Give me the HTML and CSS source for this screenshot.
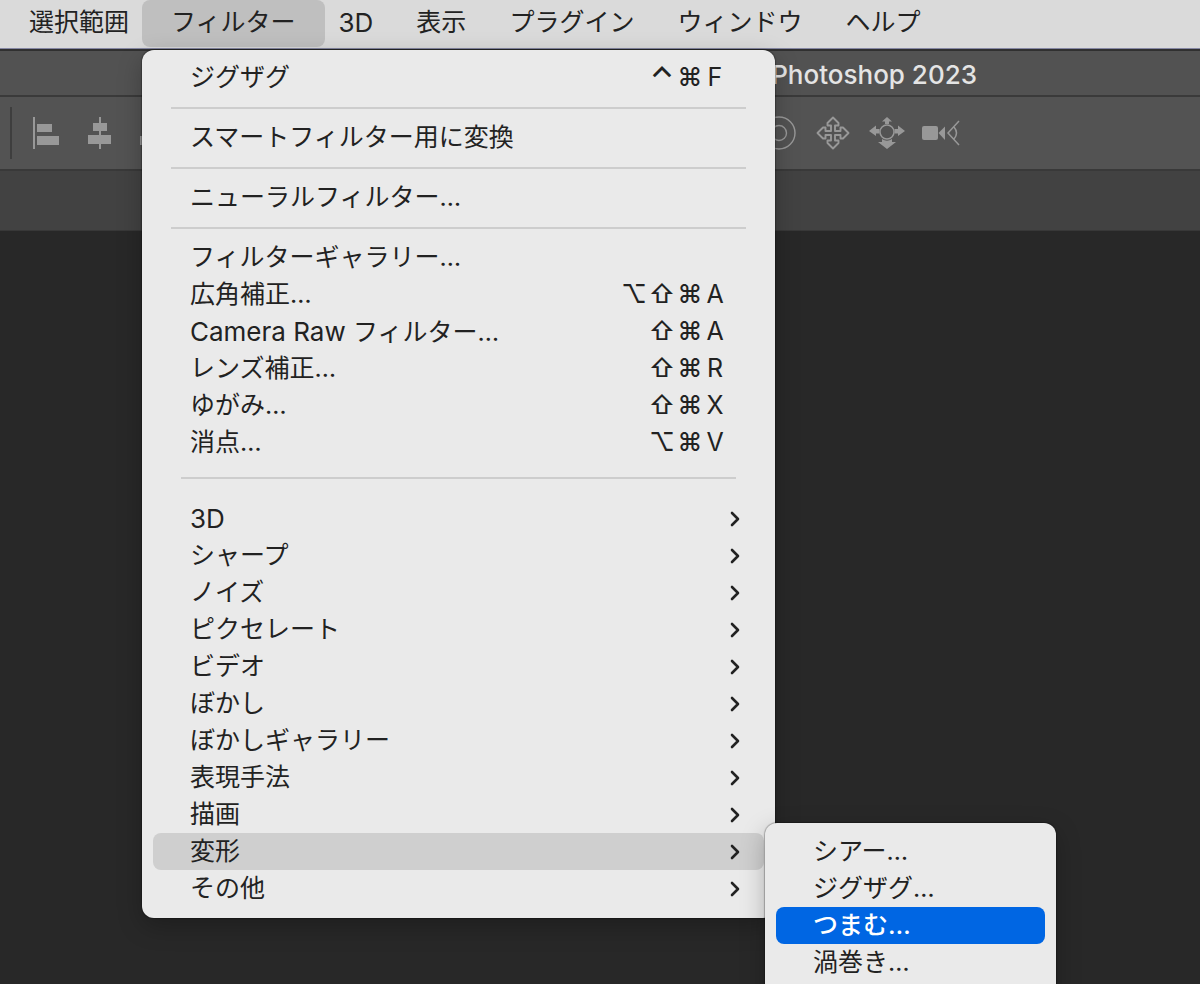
FILE: index.html
```html
<!DOCTYPE html>
<html lang="ja">
<head>
<meta charset="utf-8">
<title>Photoshop 2023</title>
<link rel="stylesheet" href="styles.css">
<script src="menu.js" defer></script>
</head>
<body>
<nav class="menubar" aria-label="メニューバー">
  <button class="menubar-item">選択範囲</button>
  <button class="menubar-item is-open" aria-expanded="true">フィルター</button>
  <button class="menubar-item latin">3D</button>
  <button class="menubar-item">表示</button>
  <button class="menubar-item">プラグイン</button>
  <button class="menubar-item">ウィンドウ</button>
  <button class="menubar-item">ヘルプ</button>
</nav>

<main class="app">
  <header class="titlebar">Photoshop 2023</header>
  <div class="options">
    <div class="tools tools-align">
      <button class="tool" aria-label="左端揃え"><svg width="32" height="32" viewBox="0 0 32 32" fill="currentColor"><path d="M4 0h2v32H4zM8 7h15v8H8zM8 19h22v9H8z"/></svg></button>
      <button class="tool" aria-label="水平方向中央揃え"><svg width="32" height="32" viewBox="0 0 32 32" fill="currentColor"><path d="M16 0h2v32h-2zM10 6h14v8H10zM5 18h23v9H5z"/></svg></button>
      <button class="tool" aria-label="右端揃え"><svg width="32" height="32" viewBox="0 0 32 32" fill="currentColor"><path d="M27 0h2v32h-2zM10 7h15v8H10zM3 19h22v9H3z"/></svg></button>
    </div>
    <div class="tools tools-3d">
      <button class="tool" aria-label="3D 回転"><svg width="38" height="38" viewBox="0 0 38 38" fill="none" stroke="currentColor" stroke-width="1.4"><circle cx="19" cy="19" r="16"/><circle cx="19" cy="19" r="7.5"/></svg></button>
      <button class="tool" aria-label="3D パン"><svg width="38" height="38" viewBox="0 0 38 38" fill="none" stroke="currentColor" stroke-width="1.9" stroke-linejoin="round"><path d="M19 3.500L24.500 9v2.500H21V17h5.500v-3.500H29l5.500 5.500-5.500 5.500h-2.500V21H21v5.500h3.500V29L19 34.500 13.500 29v-2.500H17V21h-5.500v3.500H9L3.500 19 9 13.500h2.500V17H17v-5.500h-3.500V9z"/></svg></button>
      <button class="tool" aria-label="3D スライド"><svg width="38" height="38" viewBox="0 0 38 38" fill="currentColor"><circle cx="19" cy="18" r="7" fill="none" stroke="currentColor" stroke-width="1.5"/><path d="M19 3l5 4.500h-3V10h-4V7.500h-3zM1 17l7-5.500v3.500h3.500v4.500H8V22zM37 17l-7-5.500v3.500h-3.500v4.500H30V22zM14 25q5 3.500 10 0v3h4l-9 7-9-7h4z"/></svg></button>
      <button class="tool" aria-label="3D カメラ"><svg width="38" height="38" viewBox="0 0 38 38" fill="currentColor"><rect y="12" width="16" height="14" rx="2"/><path d="M16.500 19L23 12.500v13.500z"/><path d="M37 7L26 19l11 12M32 13q5 6 0 12" fill="none" stroke="currentColor" stroke-width="1.500"/></svg></button>
    </div>
  </div>
  <div class="tabs"></div>
  <div class="canvas"></div>
</main>

<div class="menu menu-filter" role="menu" aria-label="フィルター">
  <button class="menu-item" role="menuitem">ジグザグ<span class="keys"><span class="key-control">⌃</span><span>⌘</span><span class="key-letter">F</span></span></button>
  <hr class="separator">
  <button class="menu-item" role="menuitem">スマートフィルター用に変換</button>
  <hr class="separator">
  <button class="menu-item" role="menuitem">ニューラルフィルター…</button>
  <hr class="separator">
  <button class="menu-item" role="menuitem">フィルターギャラリー…</button>
  <button class="menu-item" role="menuitem">広角補正…<span class="keys"><span>⌥</span><span>⇧</span><span>⌘</span><span class="key-letter">A</span></span></button>
  <button class="menu-item" role="menuitem"><span><span class="latin">Camera Raw </span>フィルター…</span><span class="keys"><span>⇧</span><span>⌘</span><span class="key-letter">A</span></span></button>
  <button class="menu-item" role="menuitem">レンズ補正…<span class="keys"><span>⇧</span><span>⌘</span><span class="key-letter">R</span></span></button>
  <button class="menu-item" role="menuitem">ゆがみ…<span class="keys"><span>⇧</span><span>⌘</span><span class="key-letter">X</span></span></button>
  <button class="menu-item" role="menuitem">消点…<span class="keys"><span>⌥</span><span>⌘</span><span class="key-letter">V</span></span></button>
  <hr class="separator separator-wide">
  <button class="menu-item has-submenu latin" role="menuitem">3D</button>
  <button class="menu-item has-submenu" role="menuitem">シャープ</button>
  <button class="menu-item has-submenu" role="menuitem">ノイズ</button>
  <button class="menu-item has-submenu" role="menuitem">ピクセレート</button>
  <button class="menu-item has-submenu" role="menuitem">ビデオ</button>
  <button class="menu-item has-submenu" role="menuitem">ぼかし</button>
  <button class="menu-item has-submenu" role="menuitem">ぼかしギャラリー</button>
  <button class="menu-item has-submenu" role="menuitem">表現手法</button>
  <button class="menu-item has-submenu" role="menuitem">描画</button>
  <button class="menu-item has-submenu is-expanded" role="menuitem" aria-expanded="true">変形</button>
  <button class="menu-item has-submenu" role="menuitem">その他</button>
</div>

<div class="menu menu-distort" role="menu" aria-label="変形">
  <button class="menu-item" role="menuitem">シアー…</button>
  <button class="menu-item" role="menuitem">ジグザグ…</button>
  <button class="menu-item is-selected" role="menuitem">つまむ…</button>
  <button class="menu-item" role="menuitem">渦巻き…</button>
</div>
</body>
</html>
```
FILE: menu.js
```js
const chevron = '<svg class="chevron" width="12" height="16" viewBox="0 0 12 16" fill="none" stroke="currentColor" stroke-width="2.6" stroke-linecap="round" stroke-linejoin="round" aria-hidden="true"><path d="M3 2l6 6-6 6"/></svg>';
for (const item of document.querySelectorAll('.has-submenu')) {
  item.insertAdjacentHTML('beforeend', chevron);
}
```
FILE: styles.css
```css
* {
  box-sizing: border-box;
}

body {
  display: flex;
  flex-direction: column;
  position: relative;
  height: 100vh;
  margin: 0;
  overflow: hidden;
  background: #282828;
  color: #222;
  font-family: Inter, "Noto Sans CJK JP", sans-serif;
  font-size: 25px;
  line-height: 37px;
}

button {
  border: 0;
  padding: 0;
  background: none;
  color: inherit;
  font: inherit;
  text-align: left;
  white-space: nowrap;
}

.latin {
  font-size: 26px;
}

.menubar {
  display: flex;
  gap: 15px;
  padding: 0 15px 1px;
  background: #dadada;
  border-bottom: 1px solid #8587a3;
}

.menubar-item {
  height: 47px;
  padding: 0 14px 3px;
}

.menubar-item.is-open {
  margin: 0 -15px 0 -16px;
  padding: 0 29px 3px;
  border-radius: 8px;
  background: #bfbfbf;
}

.app {
  display: flex;
  flex: 1;
  flex-direction: column;
}

.titlebar {
  height: 48px;
  padding: 5px 223px 0 0;
  border-top: 2px solid #303030;
  border-bottom: 2px solid #3a3a3a;
  background: #525252;
  color: #e4e4e4;
  font-size: 26px;
  font-weight: 500;
  text-align: right;
}

.options {
  display: flex;
  align-items: center;
  justify-content: space-between;
  height: 74px;
  padding: 0 20% 0 10px;
  border-bottom: 2px solid #393939;
  background: #535353;
  color: #989898;
}

.tools {
  display: flex;
}

.tool {
  display: flex;
}

.tools-align {
  align-items: center;
  gap: 22px;
  height: 52px;
  padding-left: 17px;
  border-left: 2px solid #3e3e3e;
}

.tools-3d {
  gap: 16px;
}

.tabs {
  height: 60px;
  border-bottom: 1px solid #383838;
  background: #424242;
}

.canvas {
  flex: 1;
}

.menu {
  display: flex;
  position: absolute;
  flex-direction: column;
  border-radius: 12px;
  background: #eaeaea;
  box-shadow: 0 0 1px 1px #00000040, 0 8px 24px #00000040;
}

.menu-filter {
  top: 50px;
  left: 142px;
  width: 633px;
  padding: 9px 11px 11px;
}

.menu-distort {
  top: 823px;
  left: 765px;
  width: 291px;
  padding: 10px 11px 37px;
}

.menu-item {
  display: flex;
  align-items: center;
  justify-content: space-between;
  height: 37px;
  padding: 0 23px 0 37px;
  border-radius: 8px;
}

.menu-item.is-expanded {
  background: #cfcfcf;
}

.menu-item.is-selected {
  background: #0066e3;
  color: #fff;
  font-weight: 500;
}

.separator {
  width: 575px;
  height: 2px;
  margin: 11px auto 10px 18px;
  border: 0;
  background: #cdcdcd;
}

.separator-wide {
  width: 555px;
  margin: 16px auto 21px 28px;
}

.keys {
  display: flex;
  padding-right: 15px;
  font-weight: 500;
}

.keys span {
  width: 28px;
  text-align: center;
}

.keys .key-control {
  font-size: 31px;
}

.keys .key-letter {
  width: 22px;
  font-weight: 400;
}
```
